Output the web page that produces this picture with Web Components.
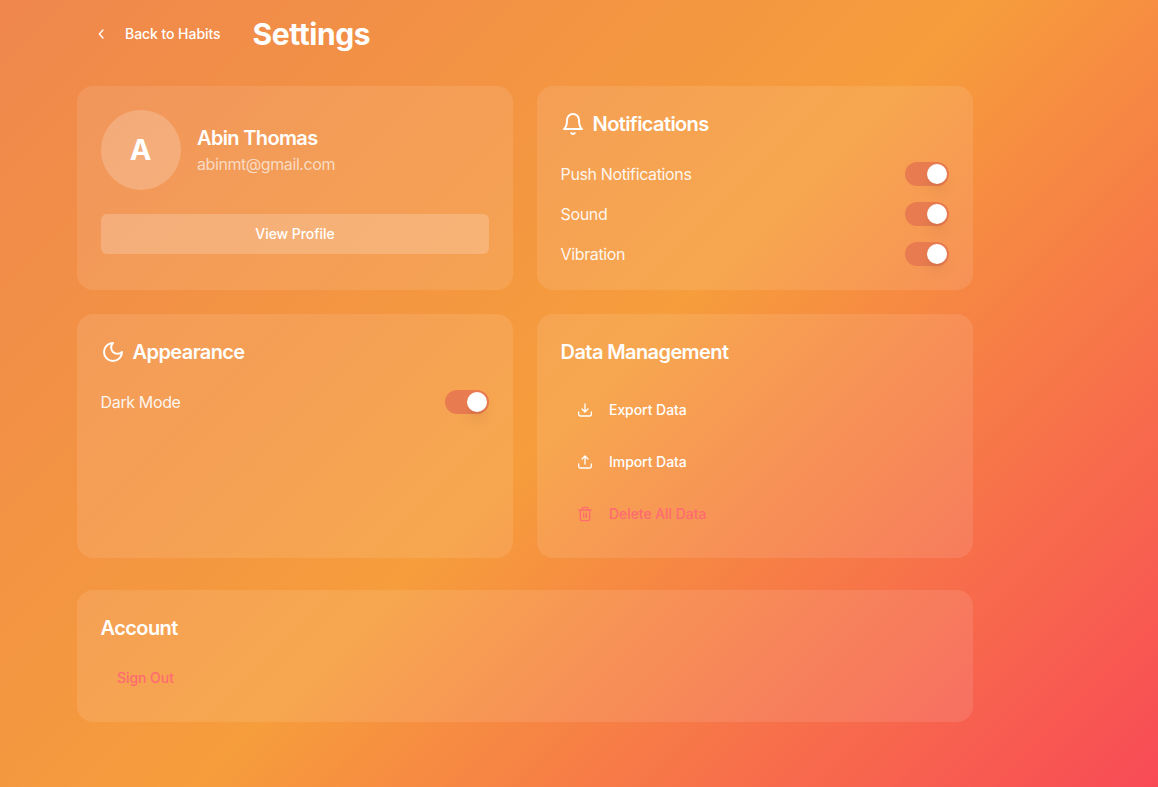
<!DOCTYPE html>
<html lang="en">
<head>
<meta charset="utf-8">
<title>Settings</title>
<style>
html,body{margin:0;height:100%}
body{font-family:Inter,"Liberation Sans",sans-serif;color:#fff;overflow:hidden}
</style>
</head>
<body>
<settings-page></settings-page>
<script>
const define = (name, html, setup) => customElements.define(name, class extends HTMLElement {
  constructor() {
    super();
    const t = document.createElement('template');
    t.innerHTML = html;
    this.attachShadow({mode: 'open'}).append(t.content.cloneNode(true));
  }
  connectedCallback() { if (setup) setup(this); }
});

const icons = {
  back: '<path d="M15 6 9.5 12l5.5 6"/>',
  bell: '<path d="M18 8A6 6 0 0 0 6 8c0 7-3 9-3 9h18s-3-2-3-9M13.73 21a2 2 0 0 1-3.46 0"/>',
  moon: '<path d="M12 3a6 6 0 0 0 9 9 9 9 0 1 1-9-9Z"/>',
  down: '<path d="M21.5 15v3.5a2.5 2.5 0 0 1-2.5 2.5H5a2.5 2.5 0 0 1-2.5-2.5V15M7.5 10.5l4.5 4.5 4.5-4.5M12 15V3"/>',
  up: '<path d="M21.5 15v3.5a2.5 2.5 0 0 1-2.5 2.5H5a2.5 2.5 0 0 1-2.5-2.5V15M7.5 7.5L12 3l4.5 4.5M12 3v12"/>',
  trash: '<path d="M3 6h18M19 6v14a2 2 0 0 1-2 2H7a2 2 0 0 1-2-2V6M8 6V4a2 2 0 0 1 2-2h4a2 2 0 0 1 2 2v2M10 11v6M14 11v6"/>'
};
define('ui-icon', `<style>
:host{display:block;flex:none;width:24px;height:24px}
:host([small]){width:16px;height:16px}
svg{display:block;width:100%;height:100%;fill:none;stroke:currentColor;stroke-width:2;stroke-linecap:round;stroke-linejoin:round}
</style><svg viewBox="0 0 24 24"></svg>`, el => {
  el.shadowRoot.querySelector('svg').innerHTML = icons[el.getAttribute('name')];
});

define('settings-card', `<style>
:host{display:block;box-sizing:border-box;padding:24px;border-radius:16px;background:rgba(255,255,255,.1)}
</style><slot></slot>`);

define('card-title', `<style>
:host{display:flex;align-items:center;gap:8px;height:28px;margin-bottom:24px;font-size:20px;line-height:28px;font-weight:600;letter-spacing:-.6px;white-space:nowrap}
span{margin-left:-.4px}
</style><slot name="icon"></slot><span><slot></slot></span>`);

define('toggle-row', `<style>
:host{display:flex;align-items:center;justify-content:space-between;height:24px;font-size:16px;line-height:24px;font-weight:400;color:rgba(255,255,255,.92);letter-spacing:-.37px}
span{margin-left:-.4px}
.track{box-sizing:border-box;width:44px;height:24px;border-radius:12px;padding:2px;display:flex;justify-content:flex-end;background:#e97b50}
.thumb{width:20px;height:20px;border-radius:50%;background:#fff;box-shadow:0 10px 15px -3px rgba(0,0,0,.1),0 4px 6px -4px rgba(0,0,0,.1)}
</style><span><slot></slot></span><div class="track"><div class="thumb"></div></div>`);

define('ghost-button', `<style>
:host{display:flex;align-items:center;box-sizing:border-box;height:40px;padding:0 16px;gap:16px;border-radius:6px;font-size:14px;line-height:20px;font-weight:500;letter-spacing:-.06px;white-space:nowrap}
:host([filled]){justify-content:center;background:rgba(255,255,255,.2)}
:host([danger]){color:#ff6b70}
</style><slot name="icon"></slot><span><slot></slot></span>`);

define('profile-summary', `<style>
:host{display:flex;align-items:center;gap:16px;margin-bottom:24px}
.avatar{width:80px;height:80px;border-radius:50%;background:rgba(255,255,255,.2);display:flex;align-items:center;justify-content:center;font-size:29px;font-weight:700;line-height:36px}
.avatar span{margin-right:1px}
.name{font-size:20px;line-height:28px;font-weight:600;letter-spacing:-.65px}
.mail{font-size:16px;line-height:24px;font-weight:400;color:rgba(255,255,255,.65);letter-spacing:-.42px}
</style><div class="avatar"><span>A</span></div><div><div class="name"><slot name="name"></slot></div><div class="mail"><slot name="mail"></slot></div></div>`);

define('settings-page', `<style>
:host{display:block;box-sizing:border-box;height:100vh;padding:14px 185px 0 77px;background:linear-gradient(135deg,#ef874d 0%,#f69d3c 50.7%,#f84a56 100%)}
header{display:flex;align-items:center;gap:16px;height:40px;margin-bottom:32px}
h1{margin:0;font-size:30px;line-height:36px;font-weight:700;letter-spacing:-.42px}
.grid{display:grid;grid-template-columns:1fr 1fr;grid-template-rows:204px 244px;gap:24px;margin-bottom:32px}
.rows{display:grid;gap:16px}
.actions{display:grid;gap:12px}
.account{height:132px}
.account card-title{margin-bottom:16px}
</style>
<header><ghost-button><ui-icon slot="icon" name="back" small></ui-icon>Back to Habits</ghost-button><h1>Settings</h1></header>
<div class="grid">
<settings-card><profile-summary><span slot="name">Abin Thomas</span><span slot="mail">abinmt@gmail.com</span></profile-summary><ghost-button filled>View Profile</ghost-button></settings-card>
<settings-card><card-title><ui-icon slot="icon" name="bell"></ui-icon>Notifications</card-title><div class="rows"><toggle-row>Push Notifications</toggle-row><toggle-row>Sound</toggle-row><toggle-row>Vibration</toggle-row></div></settings-card>
<settings-card><card-title><ui-icon slot="icon" name="moon"></ui-icon>Appearance</card-title><toggle-row>Dark Mode</toggle-row></settings-card>
<settings-card><card-title>Data Management</card-title><div class="actions"><ghost-button><ui-icon slot="icon" name="down" small></ui-icon>Export Data</ghost-button><ghost-button><ui-icon slot="icon" name="up" small></ui-icon>Import Data</ghost-button><ghost-button danger><ui-icon slot="icon" name="trash" small></ui-icon>Delete All Data</ghost-button></div></settings-card>
</div>
<settings-card class="account"><card-title>Account</card-title><ghost-button danger>Sign Out</ghost-button></settings-card>`);
</script>
</body>
</html>
